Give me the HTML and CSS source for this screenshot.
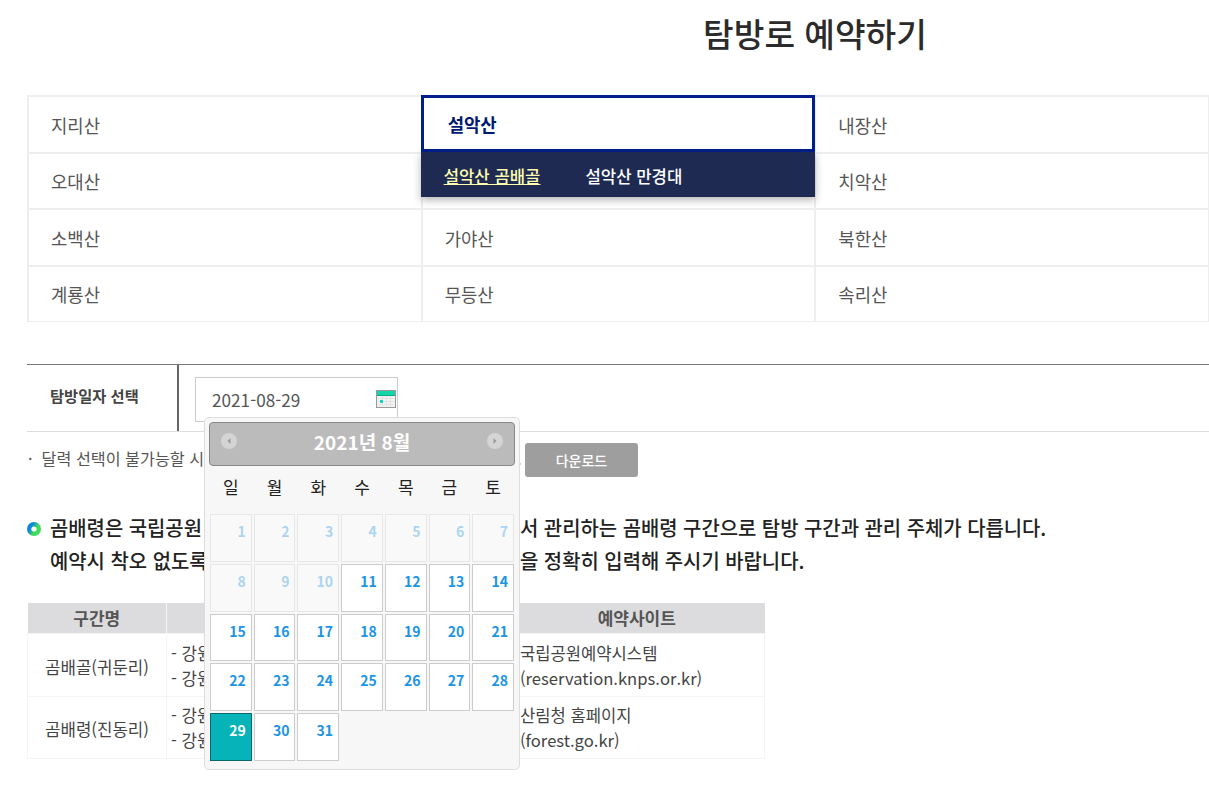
FILE: index.html
```html
<!DOCTYPE html>
<html lang="ko">
<head>
  <meta charset="UTF-8">
  <title>탐방로 예약하기</title>
  <link rel="stylesheet" href="styles.css">
</head>
<body>
<main class="wrap">
  <h2 class="page-title">탐방로 예약하기</h2>

  <!-- 산 선택 -->
  <ul class="mountain-list">
    <li>지리산</li>
    <li class="active">설악산
      <div class="sub-menu">
        <a href="#" class="current">설악산 곰배골</a>
        <a href="#">설악산 만경대</a>
      </div>
    </li>
    <li>내장산</li>
    <li>오대산</li>
    <li></li>
    <li>치악산</li>
    <li>소백산</li>
    <li>가야산</li>
    <li>북한산</li>
    <li>계룡산</li>
    <li>무등산</li>
    <li>속리산</li>
  </ul>

  <!-- 탐방일자 -->
  <div class="date-row">
    <div class="date-label">탐방일자 선택</div>
    <div class="date-field">
      <div class="date-input">
        <span>2021-08-29</span>
        <svg class="cal-icon" width="20" height="18" viewBox="0 0 20 18">
          <rect x="0.5" y="0.5" width="19" height="17" fill="#f2f2f2" stroke="#999"/>
          <rect x="1" y="1" width="18" height="4" fill="#12d6a8"/>
          <path d="M1 5.5h18" stroke="#0aa886"/>
          <path d="M2 8.5h16M2 11.5h16M2 14.5h16M6.5 6v10M10.5 6v10M14.5 6v10" stroke="#e2e2e2"/>
          <rect x="4" y="10" width="3" height="3" fill="#12d6c0"/>
        </svg>
      </div>

      <div class="datepicker">
        <div class="dp-header">
          <span class="dp-nav"><svg width="8" height="8" viewBox="0 0 8 8"><path d="M5.5 1 2.5 4l3 3z" fill="#999"/></svg></span>
          <span class="dp-title">2021년 8월</span>
          <span class="dp-nav"><svg width="8" height="8" viewBox="0 0 8 8"><path d="M2.5 1l3 3-3 3z" fill="#999"/></svg></span>
        </div>
        <div class="dp-week">
          <span>일</span><span>월</span><span>화</span><span>수</span><span>목</span><span>금</span><span>토</span>
        </div>
        <div class="dp-days">
          <a class="off">1</a><a class="off">2</a><a class="off">3</a><a class="off">4</a><a class="off">5</a><a class="off">6</a><a class="off">7</a>
          <a class="off">8</a><a class="off">9</a><a class="off">10</a><a>11</a><a>12</a><a>13</a><a>14</a>
          <a>15</a><a>16</a><a>17</a><a>18</a><a>19</a><a>20</a><a>21</a>
          <a>22</a><a>23</a><a>24</a><a>25</a><a>26</a><a>27</a><a>28</a>
          <a class="sel">29</a><a>30</a><a>31</a>
        </div>
      </div>
    </div>
  </div>

  <div class="notice-row">
    <p class="notice">·&nbsp;&nbsp;달력 선택이 불가능할 시 <em>예</em></p>
    <span class="notice-end">.</span>
    <a href="#" class="down-btn">다운로드</a>
  </div>

  <div class="info">
    <svg class="info-icon" width="14" height="14" viewBox="0 0 14 14">
      <defs>
        <linearGradient id="ring" x1="0" y1="0" x2="1" y2="0.6">
          <stop offset="0.35" stop-color="#0b86e0"/>
          <stop offset="0.7" stop-color="#3ddc5a"/>
        </linearGradient>
      </defs>
      <circle cx="7" cy="7" r="7" fill="url(#ring)"/>
      <circle cx="7" cy="7" r="2.6" fill="#fff"/>
    </svg>
    <div class="info-text">
      <p><span>곰배령은 국립공원</span><span>서 관리하는 곰배령 구간으로 탐방 구간과 관리 주체가 다릅니다.</span></p>
      <p><span>예약시 착오 없도록</span><span>을 정확히 입력해 주시기 바랍니다.</span></p>
    </div>
  </div>

  <table class="course-table">
    <thead>
      <tr><th class="c1">구간명</th><th class="c2"></th><th>예약사이트</th></tr>
    </thead>
    <tbody>
      <tr>
        <td class="name">곰배골(귀둔리)</td>
        <td class="left">- 강원<br>- 강원</td>
        <td class="left site">국립공원예약시스템<br>(reservation.knps.or.kr)</td>
      </tr>
      <tr>
        <td class="name">곰배령(진동리)</td>
        <td class="left">- 강원<br>- 강원</td>
        <td class="left site">산림청 홈페이지<br>(forest.go.kr)</td>
      </tr>
    </tbody>
  </table>
</main>
</body>
</html>
```

FILE: styles.css
```css
* {
  margin: 0;
  padding: 0;
  box-sizing: border-box;
  font-family: "Noto Sans CJK KR", "Noto Sans", sans-serif;
}

body {
  background-color: white;
  color: #555;
}

a {
  text-decoration: none;
}

.wrap {
  padding: 0 0 40px 27px;
}

.page-title {
  padding: 9px 0 0 394px;
  height: 95px;
  text-align: center;
  font-size: 33.3px;
  line-height: 48px;
  font-weight: 500;
  color: #2b2b2b;
}

/* 산 선택 */
.mountain-list {
  display: grid;
  grid-template-columns: repeat(3, 1fr);
  grid-template-rows: 57px 56px 57px 56px;
  list-style: none;
  border-right: 1px solid #eee;
  border-bottom: 1px solid #eee;
}

.mountain-list li {
  position: relative;
  display: flex;
  align-items: center;
  padding-left: 22px;
  border-top: 2px solid #eee;
  border-left: 2px solid #eee;
  font-size: 17.8px;
}

.mountain-list li.active {
  margin-right: -1px;
  padding: 0 0 0 24px;
  border: 3px solid #001f8c;
  font-weight: 700;
  color: #001a70;
  z-index: 1;
}

.sub-menu {
  position: absolute;
  top: 54px;
  left: -3px;
  right: -3px;
  height: 45px;
  display: flex;
  gap: 45px;
  align-items: center;
  padding: 2px 0 0 23px;
  background-color: #1f2a52;
  box-shadow: 0 3px 8px rgba(0,0,0,0.3);
  z-index: 2;
}

.sub-menu a {
  color: white;
  font-size: 16.7px;
  font-weight: 500;
}

.sub-menu a.current {
  color: #ffffb0;
  text-decoration: underline;
}

/* 탐방일자 */
.date-row {
  display: flex;
  height: 68px;
  margin-top: 42px;
  border-top: 1px solid #777;
  border-bottom: 1px solid #ddd;
}

.date-label {
  width: 152px;
  border-right: 2px solid #666;
  padding: 18px 0 0 23px;
  font-size: 15.3px;
  line-height: 24px;
  font-weight: 700;
  color: #444;
}

.date-field {
  position: relative;
  flex: 1;
  padding: 12px 0 0 16px;
}

.date-input {
  display: flex;
  justify-content: space-between;
  width: 203px;
  height: 45px;
  padding: 10px 1px 0 16px;
  border: 1px solid #ccc;
  font-size: 17.2px;
  line-height: 24px;
}

.cal-icon {
  margin-top: 2px;
}

.datepicker {
  position: absolute;
  top: 52px;
  left: 25px;
  width: 316px;
  height: 353px;
  padding: 4px;
  background-color: #f7f7f7;
  border: 1px solid #ddd;
  border-radius: 5px;
  z-index: 3;
}

.dp-header {
  display: flex;
  justify-content: space-between;
  align-items: center;
  height: 44px;
  padding: 0 11px 6px;
  background-color: #bbb;
  border: 1px solid #888;
  border-radius: 4px;
}

.dp-title {
  color: white;
  font-size: 19px;
  font-weight: 700;
}

.dp-nav {
  display: flex;
  align-items: center;
  justify-content: center;
  width: 16px;
  height: 16px;
  border-radius: 50%;
  background-color: #d4d4d4;
}

.dp-week {
  display: grid;
  grid-template-columns: repeat(7, 1fr);
  gap: 2px;
  height: 48px;
  padding: 0 1px 7px;
  text-align: center;
  align-items: center;
  font-size: 17px;
  color: #222;
}

.dp-days {
  display: grid;
  grid-template-columns: repeat(7, 1fr);
  grid-template-rows: repeat(5, 1fr);
  gap: 2px;
  height: 247px;
  padding: 0 1px;
}

.dp-days a {
  padding: 6px 5px 0 0;
  text-align: right;
  font-size: 14px;
  line-height: 20px;
  font-weight: 700;
  color: #1c94e4;
  background-color: white;
  border: 1px solid #ccc;
}

.dp-days a.off {
  opacity: 0.35;
}

.dp-days a.sel {
  background-color: #05b3b8;
  border-color: #07696d;
  color: white;
}

/* 안내 */
.notice-row {
  display: flex;
  align-items: center;
  height: 34px;
  margin-top: 11px;
}

.notice {
  width: 490px;
  margin-bottom: 5px;
  padding-left: 1px;
  font-size: 16.2px;
  color: #555;
}

.notice em {
  margin-left: -3px;
  font-style: normal;
  color: #e57a1f;
}

.notice-end {
  width: 8px;
  margin-bottom: 5px;
  font-size: 16px;
}

.down-btn {
  width: 113px;
  height: 34px;
  background-color: #9e9e9e;
  border-radius: 3px;
  text-align: center;
  color: white;
  font-size: 14px;
  line-height: 34px;
  font-weight: 500;
}

.info {
  display: flex;
  gap: 9px;
  margin-top: 34px;
}

.info-icon {
  margin-top: 11px;
  flex-shrink: 0;
}

.info-text p {
  display: flex;
  font-size: 19.9px;
  line-height: 33px;
  font-weight: 500;
  color: #222;
}

.info-text span:first-child {
  width: 470px;
}

/* 표 */
.course-table {
  width: 738px;
  margin-top: 26px;
  border-collapse: collapse;
  table-layout: fixed;
  font-size: 16.8px;
}

.course-table th {
  height: 30px;
  background-color: #dcdcdf;
  border-right: 1px solid #f4f4f4;
  font-size: 17px;
  font-weight: 700;
  color: #555;
}

.course-table th:last-child {
  border-right: 0;
}

.course-table .c1 {
  width: 139px;
}

.course-table .c2 {
  width: 342px;
}

.course-table td {
  height: 63px;
  padding-top: 2px;
  border: 1px solid #f4f4f4;
  line-height: 25px;
  text-align: center;
  color: #444;
}

.course-table tr:last-child td {
  height: 62px;
}

.course-table td.name {
  padding-top: 5px;
}

.course-table td.left {
  padding-left: 4px;
  text-align: left;
}

.course-table td.site {
  padding-left: 11px;
  font-size: 16.6px;
}
```
